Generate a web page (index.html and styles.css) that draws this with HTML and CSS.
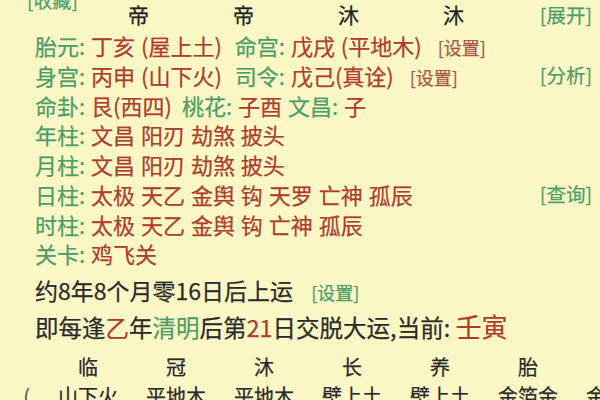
FILE: index.html
```html
<!DOCTYPE html>
<html lang="zh-CN">
<head>
<meta charset="utf-8">
<link rel="stylesheet" href="styles.css">
</head>
<body>
<div class="page">
  <div class="fav"><span class="g">[收藏]</span></div>
  <div class="head">
    <div class="cols4"><span>帝</span><span>帝</span><span>沐</span><span>沐</span></div>
    <span class="btn g">[展开]</span>
  </div>
  <div class="row">
    <div><span class="g">胎元:</span> <span class="r">丁亥 (屋上土)</span> <span class="g lab2">命宫:</span> <span class="r">戊戌 (平地木)</span> <span class="set">[设置]</span></div>
  </div>
  <div class="row">
    <div><span class="g">身宫:</span> <span class="r">丙申 (山下火)</span> <span class="g lab2">司令:</span> <span class="r">戊己(真诠)</span> <span class="set">[设置]</span></div>
    <span class="btn g">[分析]</span>
  </div>
  <div class="row">
    <div><span class="g">命卦:</span> <span class="r">艮(西四)</span> <span class="g lab3">桃花:</span> <span class="r">子酉</span> <span class="g">文昌:</span> <span class="r">子</span></div>
  </div>
  <div class="row">
    <div><span class="g">年柱:</span> <span class="r">文昌 阳刃 劫煞 披头</span></div>
  </div>
  <div class="row">
    <div><span class="g">月柱:</span> <span class="r">文昌 阳刃 劫煞 披头</span></div>
  </div>
  <div class="row">
    <div><span class="g">日柱:</span> <span class="r">太极 天乙 金舆 钩 天罗 亡神 孤辰</span></div>
    <span class="btn g">[查询]</span>
  </div>
  <div class="row">
    <div><span class="g">时柱:</span> <span class="r">太极 天乙 金舆 钩 亡神 孤辰</span></div>
  </div>
  <div class="row">
    <div><span class="g">关卡:</span> <span class="r">鸡飞关</span></div>
  </div>
  <div class="line start">约8年8个月零16日后上运 <span class="set2 g">[设置]</span></div>
  <div class="line every">即每逢<span class="r">乙</span>年<span class="g">清明</span>后第<span class="r">21</span>日交脱大运,当前: <span class="r big">壬寅</span></div>
  <div class="cycle top">
    <span></span><span>临</span><span>冠</span><span>沐</span><span>长</span><span>养</span><span>胎</span><span></span>
  </div>
  <div class="cycle bottom">
    <span class="edge">(</span><span>山下火</span><span>平地木</span><span>平地木</span><span>壁上土</span><span>壁上土</span><span>金箔金</span><span>金箔金</span>
  </div>
</div>
</body>
</html>
```

FILE: styles.css
```css
html, body {
  margin: 0;
  padding: 0;
  background: #fcf8c6;
  overflow: hidden;
}
body {
  width: 600px;
  height: 400px;
  font-family: "Noto Sans CJK SC", "Noto Sans", sans-serif;
  color: #2b2b2b;
  -webkit-text-stroke: 0.25px currentColor;
}
.page {
  height: 400px;
  padding-left: 35px;
  border-left: 2px solid #f1edbb;
  margin-left: -2px;
  box-sizing: border-box;
  overflow: hidden;
}
.g { color: #4c9d68; }
.r { color: #ad3d2e; }
.set { color: #a9584a; font-size: 18px; margin-left: 10px; }
.set2 { font-size: 18px; margin-left: 13px; }
.lab2 { margin-left: 7px; }
.lab3 { margin-left: 4px; }

.fav {
  height: 6px;
  line-height: 16px;
  margin-top: -8px;
  margin-left: -8px;
  font-size: 19px;
  white-space: nowrap;
}
.head {
  display: flex;
  justify-content: space-between;
  align-items: center;
  height: 32px;
  padding-right: 8px;
}
.cols4 {
  display: grid;
  grid-template-columns: repeat(4, 105px);
  margin-left: 51px;
  font-size: 21px;
  text-align: center;
  color: #222;
}
.btn {
  font-size: 19.5px;
}
.row {
  display: flex;
  justify-content: space-between;
  align-items: center;
  height: 29.8px;
  padding-right: 8px;
  font-size: 22px;
  word-spacing: 1px;
  white-space: nowrap;
}
.line {
  font-size: 23px;
  white-space: nowrap;
}
.start {
  margin-top: 5.6px;
  line-height: 32px;
}
.every {
  font-size: 23.5px;
  line-height: 36px;
}
.big { font-size: 26px; }
.cycle {
  display: grid;
  grid-template-columns: repeat(8, 88px);
  margin-left: -79px;
  text-align: center;
  font-size: 20px;
  color: #2a2a2a;
  white-space: nowrap;
}
.cycle.top {
  margin-top: 7px;
  line-height: 30px;
}
.cycle.bottom {
  line-height: 28px;
}
.edge {
  text-align: right;
  padding-right: 14px;
  color: #555;
}
```
